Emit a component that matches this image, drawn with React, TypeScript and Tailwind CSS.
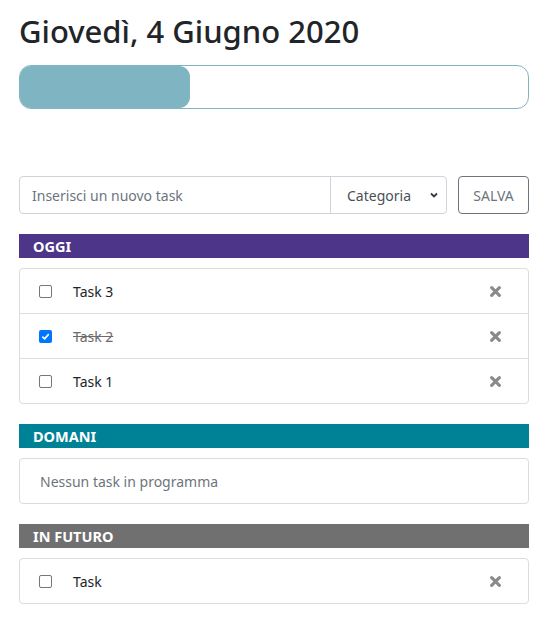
import React from 'react';

type Task = { id: number; text: string; done: boolean };

const font = { fontFamily: '"Noto Sans", "Open Sans", sans-serif' };

function CloseIcon() {
  return (
    <svg width="11" height="11" viewBox="0 0 10 10" className="text-[#8a8a8a]">
      <path d="M1.5 1.5 L8.5 8.5 M8.5 1.5 L1.5 8.5" stroke="currentColor" strokeWidth="2.8" strokeLinecap="round" />
    </svg>
  );
}

function Checkbox({ checked }: { checked: boolean }) {
  if (checked) {
    return (
      <span className="flex h-[13px] w-[13px] items-center justify-center rounded-[2px] bg-[#0075ff]">
        <svg width="9" height="9" viewBox="0 0 10 10">
          <path d="M1.5 5.2 L4 7.6 L8.6 2.4" fill="none" stroke="white" strokeWidth="1.8" />
        </svg>
      </span>
    );
  }
  return <span className="block h-[13px] w-[13px] rounded-[2px] border border-[#767676] bg-white" />;
}

function SectionHeader({ label, color }: { label: string; color: string }) {
  return (
    <div className={`h-6 pl-[14px] text-[14.5px] font-bold leading-6 text-white ${color}`}>{label}</div>
  );
}

function TaskList({ tasks }: { tasks: Task[] }) {
  return (
    <ul className="mt-[10px] rounded-[4px] border border-[#dcdcdc]">
      {tasks.map((t, i) => (
        <li
          key={t.id}
          className={`flex items-center pl-[19px] pr-[27px] ${i > 0 ? 'h-[45px] border-t border-[#dcdcdc]' : 'h-[44px]'}`}
        >
          <Checkbox checked={t.done} />
          <span className={`ml-[21px] flex-1 text-[14px] ${t.done ? 'text-[#6c6c6c] line-through' : 'text-[#212529]'}`}>
            {t.text}
          </span>
          <CloseIcon />
        </li>
      ))}
    </ul>
  );
}

export default function App() {
  const today: Task[] = [
    { id: 3, text: 'Task 3', done: false },
    { id: 2, text: 'Task 2', done: true },
    { id: 1, text: 'Task 1', done: false },
  ];
  const future: Task[] = [{ id: 4, text: 'Task', done: false }];

  return (
    <div className="min-h-screen bg-white pl-[19px] pr-[25px] pt-[12px]" style={font}>
      <h1 className="text-[31px] font-medium leading-[38px] text-[#212529]">Giovedì, 4 Giugno 2020</h1>

      {/* Progress */}
      <div className="mt-[15px] h-[44px] rounded-[12px] border border-[#7fb4c3] bg-white">
        <div className="h-full w-[170px] rounded-[11px] bg-[#7fb4c3]" />
      </div>

      {/* New task form */}
      <div className="mt-[67px] flex items-center gap-[11px]">
        <div className="flex h-[38px] flex-1 rounded-[4px] border border-[#ced4da]">
          <div className="flex flex-1 items-center pl-[12px] text-[14px] text-[#6c757d]">Inserisci un nuovo task</div>
          <div className="flex w-[116px] items-center justify-between border-l border-[#ced4da] pl-[16px] pr-[7px] text-[14px] text-[#495057]">
            Categoria
            <svg width="10" height="10" viewBox="0 0 10 10">
              <path d="M2 3.5 L5 6.5 L8 3.5" fill="none" stroke="#343a40" strokeWidth="1.8" />
            </svg>
          </div>
        </div>
        <button className="h-[38px] w-[71px] rounded-[4px] border border-[#6c757d] text-[14px] text-[#6c757d]">
          SALVA
        </button>
      </div>

      <div className="mt-[20px]">
        <SectionHeader label="OGGI" color="bg-[#4d3589]" />
        <TaskList tasks={today} />
      </div>

      <div className="mt-[20px]">
        <SectionHeader label="DOMANI" color="bg-[#008296]" />
        <div className="mt-[10px] flex h-[46px] items-center rounded-[4px] border border-[#dcdcdc] pl-[20px] text-[14px] text-[#6c757d]">
          Nessun task in programma
        </div>
      </div>

      <div className="mt-[20px]">
        <SectionHeader label="IN FUTURO" color="bg-[#707070]" />
        <TaskList tasks={future} />
      </div>
    </div>
  );
}
